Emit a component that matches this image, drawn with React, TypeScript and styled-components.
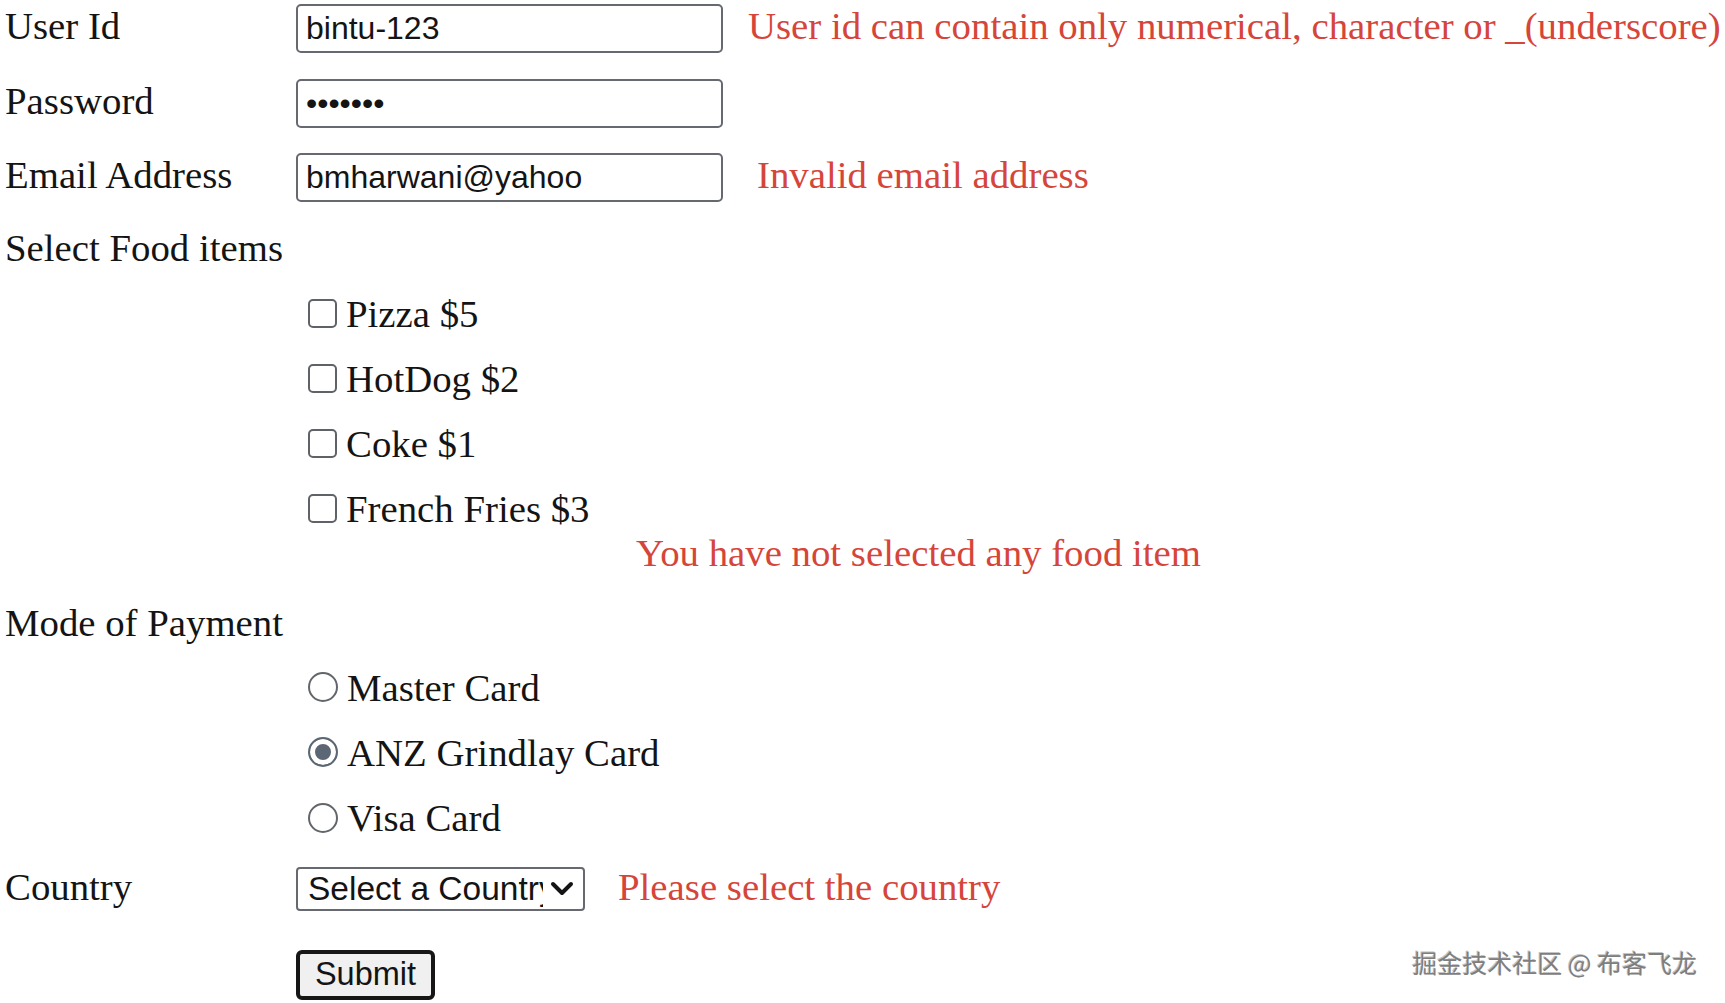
import React from "react";
import styled, { createGlobalStyle } from "styled-components";

const GlobalStyle = createGlobalStyle`
  html, body { margin: 0; padding: 0; background: #ffffff; }
  body {
    font-family: "Liberation Serif", "Times New Roman", serif;
    font-size: 38.8px;
    color: #141414;
  }
`;

const Page = styled.div`
  position: relative;
  width: 1725px;
  height: 1003px;
  box-sizing: border-box;
  padding: 3px 0 0 5px;
  display: flex;
  flex-direction: column;
  overflow: hidden;
`;

const Row = styled.div<{ $mt?: number }>`
  display: flex;
  align-items: baseline;
  margin-top: ${(p) => p.$mt ?? 0}px;
`;

const Label = styled.label`
  width: 291px;
  flex: none;
  line-height: normal;
`;

const SectionLabel = styled.div<{ $mt: number }>`
  margin-top: ${(p) => p.$mt}px;
  line-height: normal;
`;

const TextInput = styled.input`
  width: 427px;
  height: 49px;
  box-sizing: border-box;
  padding: 0 8px;
  border: 2px solid #666a70;
  border-radius: 5px;
  font-family: "Liberation Sans", Arial, sans-serif;
  font-size: 32px;
  color: #141414;
  background: #fff;
  outline: none;
`;

const ErrorText = styled.span<{ $ml: number }>`
  margin-left: ${(p) => p.$ml}px;
  color: #d6453a;
  line-height: normal;
  white-space: nowrap;
`;

const OptionList = styled.div<{ $mt: number; $gap: number }>`
  display: flex;
  flex-direction: column;
  gap: ${(p) => p.$gap}px;
  margin-top: ${(p) => p.$mt}px;
  padding-left: 303px;
`;

const Option = styled.label`
  display: flex;
  align-items: center;
  gap: 9px;
  height: 44px;
  line-height: normal;
`;

const Checkbox = styled.input.attrs({ type: "checkbox" })`
  appearance: none;
  margin: 0;
  width: 29px;
  height: 29px;
  box-sizing: border-box;
  border: 2px solid #5f6368;
  border-radius: 5px;
  background: #fff;
  flex: none;
`;

const Radio = styled.input.attrs({ type: "radio" })`
  appearance: none;
  margin: 0;
  width: 30px;
  height: 30px;
  box-sizing: border-box;
  border: 2px solid #62666b;
  border-radius: 50%;
  background: #fff;
  flex: none;
  &:checked {
    border-color: #5c6775;
    background: #5c6775;
    box-shadow: inset 0 0 0 5px #fff;
  }
`;

const SelectWrap = styled.div`
  position: relative;
  display: inline-flex;
  width: 289px;
  height: 44px;
`;

const Select = styled.select`
  appearance: none;
  width: 289px;
  height: 44px;
  box-sizing: border-box;
  padding: 0 40px 0 10px;
  border: 2px solid #666a70;
  border-radius: 4px;
  background: #fff;
  font-family: "Liberation Sans", Arial, sans-serif;
  font-size: 33.5px;
  color: #141414;
  outline: none;
  overflow: hidden;
`;

const Chevron = styled.svg`
  position: absolute;
  right: 11px;
  top: 14px;
  pointer-events: none;
  background: #fff;
`;

const SubmitButton = styled.button`
  margin-left: 291px;
  width: 139px;
  height: 50px;
  box-sizing: border-box;
  border: 4px solid #161616;
  border-radius: 6px;
  background: #f0f0f0;
  font-family: "Liberation Sans", Arial, sans-serif;
  font-size: 32.5px;
  color: #141414;
  padding: 0;
`;

const Watermark = styled.div`
  position: absolute;
  right: 28px;
  top: 947px;
  font-family: "Noto Sans CJK SC", "Noto Sans", sans-serif;
  font-size: 25px;
  line-height: 30px;
  color: #7e7e7e;
  text-shadow: 1px 1px 0 #ffffff, -1px -1px 0 #c4c4c4;
`;

export default function App() {
  return (
    <>
      <GlobalStyle />
      <Page>
        <Row>
          <Label>User Id</Label>
          <TextInput type="text" defaultValue="bintu-123" />
          <ErrorText $ml={25}>
            User id can contain only numerical, character or _(underscore)
          </ErrorText>
        </Row>
        <Row $mt={24.5}>
          <Label>Password</Label>
          <TextInput type="password" defaultValue="1234567" />
        </Row>
        <Row $mt={24.5}>
          <Label>Email Address</Label>
          <TextInput type="text" defaultValue="bmharwani@yahoo" />
          <ErrorText $ml={34}>Invalid email address</ErrorText>
        </Row>

        <SectionLabel $mt={23}>Select Food items</SectionLabel>
        <OptionList $mt={21} $gap={21}>
          <Option>
            <Checkbox />
            Pizza $5
          </Option>
          <Option>
            <Checkbox />
            HotDog $2
          </Option>
          <Option>
            <Checkbox />
            Coke $1
          </Option>
          <Option>
            <Checkbox />
            French Fries $3
          </Option>
        </OptionList>
        <Row>
          <ErrorText $ml={631}>You have not selected any food item</ErrorText>
        </Row>

        <SectionLabel $mt={24.5}>Mode of Payment</SectionLabel>
        <OptionList $mt={20.5} $gap={21.3}>
          <Option>
            <Radio name="pay" />
            Master Card
          </Option>
          <Option>
            <Radio name="pay" defaultChecked />
            ANZ Grindlay Card
          </Option>
          <Option>
            <Radio name="pay" />
            Visa Card
          </Option>
        </OptionList>

        <Row $mt={24.5}>
          <Label>Country</Label>
          <SelectWrap>
            <Select defaultValue="">
              <option value="">Select a Country</option>
              <option value="in">India</option>
              <option value="au">Australia</option>
              <option value="us">USA</option>
            </Select>
            <Chevron width="24" height="16" viewBox="0 0 24 16">
              <polyline
                points="3,3 12,12 21,3"
                fill="none"
                stroke="#141414"
                strokeWidth="4"
                strokeLinecap="round"
                strokeLinejoin="round"
              />
            </Chevron>
          </SelectWrap>
          <ErrorText $ml={33}>Please select the country</ErrorText>
        </Row>

        <Row $mt={39}>
          <SubmitButton type="button">Submit</SubmitButton>
        </Row>

        <Watermark>掘金技术社区 @ 布客飞龙</Watermark>
      </Page>
    </>
  );
}
